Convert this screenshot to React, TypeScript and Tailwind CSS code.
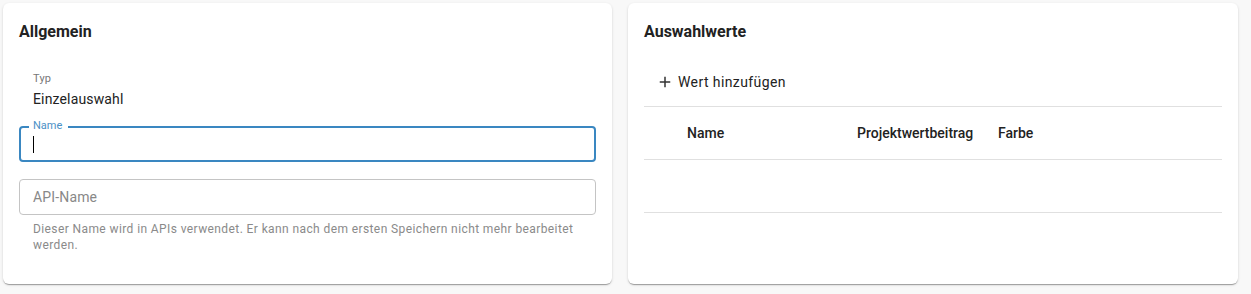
import React from 'react';

const cardShadow =
  'shadow-[0_2px_1px_-1px_rgba(0,0,0,0.2),0_1px_1px_0_rgba(0,0,0,0.14),0_1px_3px_0_rgba(0,0,0,0.12)]';

const PlusIcon = () => (
  <svg viewBox="0 0 24 24" className="w-[18px] h-[18px] fill-[#333]">
    <path d="M19 13h-6v6h-2v-6H5v-2h6V5h2v6h6z" />
  </svg>
);

const GeneralCard = () => (
  <div className={`w-[609px] h-[281px] bg-white rounded-md px-4 pt-4 ${cardShadow}`}>
    <h2 className="mt-px text-[16px] leading-6 font-bold text-[#222]">Allgemein</h2>

    <div className="mt-[27px] px-[14px]">
      <div className="text-[11px] leading-4 tracking-[0.2px] text-[#777]">Typ</div>
      <div className="mt-[2px] text-[14px] leading-5 tracking-[0.15px] text-[#222]">Einzelauswahl</div>
    </div>

    {/* focused field */}
    <div className="relative mt-[17px] h-9 border-2 border-[#3a87c1] rounded-[4px] flex items-center px-3">
      <span className="absolute left-[8px] -top-[8px] bg-white pl-[4px] pr-[6px] text-[11px] leading-[12px] text-[#4a90c6]">
        Name
      </span>
      <span className="w-px h-[17px] bg-black" />
    </div>

    <div className="mt-[17px] h-9 border border-[#c4c4c4] rounded-[4px] flex items-center px-[13px]">
      <span className="text-[14px] tracking-[0.15px] text-[#888]">API-Name</span>
    </div>
    <p className="mt-[6px] px-[14px] text-[12px] leading-4 tracking-[0.4px] text-[#8a8a8a]">
      Dieser Name wird in APIs verwendet. Er kann nach dem ersten Speichern nicht mehr bearbeitet werden.
    </p>
  </div>
);

const ValuesCard = () => (
  <div className={`w-[610px] h-[281px] bg-white rounded-md px-4 pt-4 ${cardShadow}`}>
    <h2 className="mt-px text-[16px] leading-6 font-bold text-[#222]">Auswahlwerte</h2>

    <button className="mt-[20px] ml-1 h-9 px-2 flex items-center gap-1 rounded text-[14px] tracking-[0.4px] text-[#222]">
      <PlusIcon />
      <span>Wert hinzufügen</span>
    </button>

    <div className="mt-[6px] border-t border-[#e0e0e0]" />
    <div className="grid grid-cols-[43px_170px_141px_1fr] h-[52px] items-center text-[14px] font-medium text-[#222]">
      <span />
      <span>Name</span>
      <span>Projektwertbeitrag</span>
      <span>Farbe</span>
    </div>
    <div className="border-t border-[#e0e0e0]" />
    <div className="h-[52px]" />
    <div className="border-t border-[#e0e0e0]" />
  </div>
);

export default function App() {
  return (
    <div className="w-[1251px] h-[294px] bg-[#f8f8f8] pl-[3px] pt-[3px] font-['Roboto',sans-serif]">
      <div className="flex gap-4">
        <GeneralCard />
        <ValuesCard />
      </div>
    </div>
  );
}
